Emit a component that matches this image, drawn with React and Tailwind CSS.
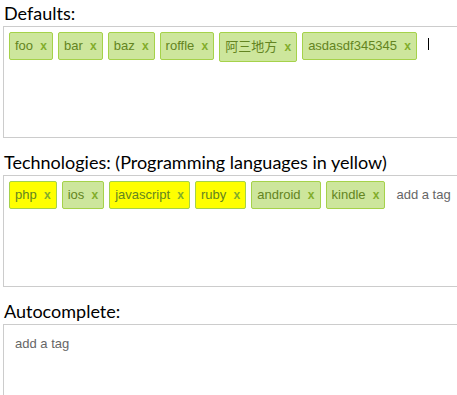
import React from "react";

function Tag({ label, yellow, tall }) {
  return (
    <span
      className={`block shrink-0 border border-[#a5d24a] rounded-[2px] p-[5px] mr-[5px] mb-[5px] text-[13px] text-[#638421] whitespace-nowrap ${
        tall ? "leading-[17px]" : "leading-[15px]"
      } ${yellow ? "bg-[#ffff00]" : "bg-[#cde69c]"}`}
      style={{ fontFamily: '"Liberation Sans", "Noto Sans CJK SC", Arial, sans-serif' }}
    >
      {label}
      {"\u00a0\u00a0"}
      <a className="font-bold text-[12px] text-[#82ad2b] no-underline">x</a>
    </span>
  );
}

function Box({ children }) {
  return (
    <div className="w-[640px] h-[112px] border border-[#cccccc] bg-white p-[5px] flex flex-wrap items-start content-start">
      {children}
    </div>
  );
}

function Placeholder({ text }) {
  return (
    <div
      className="border border-transparent p-[5px] mr-[5px] mb-[5px] w-[80px] text-[13px] leading-[15px] text-[#666] whitespace-nowrap"
      style={{ fontFamily: '"Liberation Sans", Arial, sans-serif' }}
    >
      {text}
    </div>
  );
}

function Section({ label, children, first }) {
  return (
    <div className={first ? "" : "mt-[11px]"}>
      <div className="h-[26px] pl-[1px] pt-[2px] text-[18px] leading-[22px] text-black">{label}</div>
      <Box>{children}</Box>
    </div>
  );
}

export default function App() {
  return (
    <div
      className="w-[457px] h-[395px] overflow-hidden bg-white pl-[3px]"
      style={{ fontFamily: 'Lato, "Noto Sans", sans-serif' }}
    >
      <Section label="Defaults:" first>
        <Tag label="foo" />
        <Tag label="bar" />
        <Tag label="baz" />
        <Tag label="roffle" />
        <Tag label="阿三地方" tall />
        <Tag label="asdasdf345345" />
        <div className="border border-transparent p-[5px] mb-[5px]">
          <div className="w-px h-[12px] bg-black"></div>
        </div>
      </Section>
      <Section label="Technologies: (Programming languages in yellow)">
        <Tag label="php" yellow />
        <Tag label="ios" />
        <Tag label="javascript" yellow />
        <Tag label="ruby" yellow />
        <Tag label="android" />
        <Tag label="kindle" />
        <Placeholder text="add a tag" />
      </Section>
      <Section label="Autocomplete:">
        <Placeholder text="add a tag" />
      </Section>
    </div>
  );
}
